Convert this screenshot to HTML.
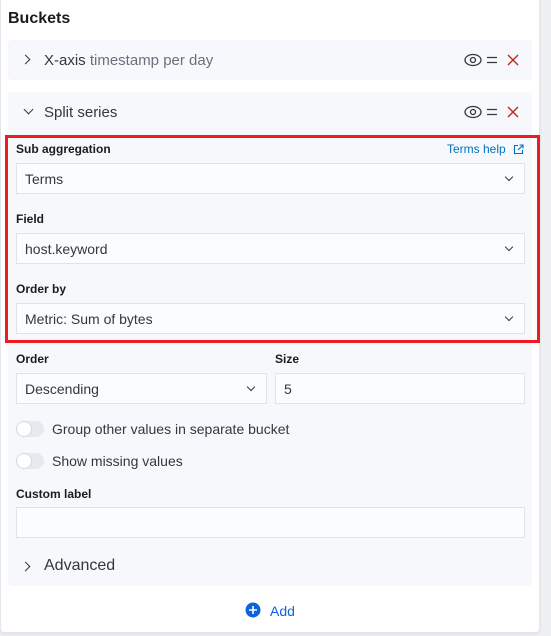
<!DOCTYPE html>
<html><head><style>
*{box-sizing:border-box;margin:0;padding:0}
body{width:551px;height:636px;background:#eef0f3;font-family:"Liberation Sans",sans-serif;position:relative;overflow:hidden}
.panel{position:absolute;left:0;top:-4px;width:540px;height:637px;background:#fff;border:1px solid #e3e6eb;border-radius:4px;box-shadow:0 1px 3px rgba(0,0,0,.08)}
.a{position:absolute}
.sec{position:absolute;left:8px;width:524px;background:#f7f8fb;border-radius:4px}
.t{font-size:15px;color:#343741}
.lbl{position:absolute;left:16px;font-size:12px;font-weight:bold;color:#1a1c21}
.inp{position:absolute;background:#fbfcfd;border:1px solid #e0e3e8;height:31px;font-size:14px;color:#343741;padding:7px 0 0 8px}
.chev{position:absolute;right:12px;top:10px;width:6px;height:6px;border-right:1.2px solid #343741;border-bottom:1.2px solid #343741;transform:rotate(45deg)}
.tog{position:absolute;left:16px;width:28px;height:16px;border-radius:8px;background:#e6e9ee}
.tog:after{content:"";position:absolute;left:0;top:0;width:16px;height:16px;border-radius:8px;background:#fff;border:1px solid #d3d8de;box-sizing:border-box}
</style></head><body>
<div class="panel"></div>
<div class="a" style="left:8px;top:10px;font-size:16px;font-weight:bold;color:#1a1c21">Buckets</div>
<div class="sec" style="top:40px;height:40px"></div>
<div class="a" style="left:22px;top:56px;width:7px;height:7px;border-right:1.3px solid #343741;border-top:1.3px solid #343741;transform:rotate(45deg)"></div>
<div class="a t" style="left:44px;top:52px">X-axis <span style="color:#69707d">timestamp per day</span></div>
<div class="sec" style="top:92px;height:494px"></div>
<div class="a" style="left:25px;top:106px;width:7px;height:7px;border-right:1.3px solid #343741;border-bottom:1.3px solid #343741;transform:rotate(45deg)"></div>
<div class="a t" style="left:44px;top:104px">Split series</div>
<svg class="a" style="left:463px;top:52px" width="60" height="16"><ellipse cx="10" cy="8" rx="8" ry="5.5" fill="none" stroke="#343741" stroke-width="1.3"/><circle cx="10" cy="8" r="2.5" fill="none" stroke="#343741" stroke-width="1.3"/><path d="M24 5.5h10M24 10.5h10" stroke="#343741" stroke-width="1.3"/><path d="M45 3l10 10M55 3l-10 10" stroke="#bd271e" stroke-width="1.4"/></svg>
<svg class="a" style="left:463px;top:104px" width="60" height="16"><ellipse cx="10" cy="8" rx="8" ry="5.5" fill="none" stroke="#343741" stroke-width="1.3"/><circle cx="10" cy="8" r="2.5" fill="none" stroke="#343741" stroke-width="1.3"/><path d="M24 5.5h10M24 10.5h10" stroke="#343741" stroke-width="1.3"/><path d="M45 3l10 10M55 3l-10 10" stroke="#bd271e" stroke-width="1.4"/></svg>
<div class="a" style="left:5px;top:135px;width:535px;height:208px;border:3px solid #ed1c24"></div>
<div class="lbl" style="top:142px">Sub aggregation</div>
<div class="a" style="left:447px;top:142px;font-size:12px;color:#0071c2">Terms help</div>
<svg class="a" style="left:513px;top:144px" width="11" height="11"><path d="M5 1.5H1.5v8h8V6M6.5 1h3.5v3.5M10 1L5 6" fill="none" stroke="#0071c2" stroke-width="1.1"/></svg>
<div class="inp" style="left:16px;top:163px;width:509px">Terms<div class="chev"></div></div>
<div class="lbl" style="top:212px">Field</div>
<div class="inp" style="left:16px;top:233px;width:509px">host.keyword<div class="chev"></div></div>
<div class="lbl" style="top:282px">Order by</div>
<div class="inp" style="left:16px;top:303px;width:509px">Metric: Sum of bytes<div class="chev"></div></div>
<div class="lbl" style="top:352px">Order</div>
<div class="lbl" style="top:352px;left:275px">Size</div>
<div class="inp" style="left:16px;top:373px;width:251px">Descending<div class="chev"></div></div>
<div class="inp" style="left:275px;top:373px;width:250px">5</div>
<div class="tog" style="top:421px"></div>
<div class="a t" style="left:52px;top:421px;font-size:14px">Group other values in separate bucket</div>
<div class="tog" style="top:453px"></div>
<div class="a t" style="left:52px;top:453px;font-size:14px">Show missing values</div>
<div class="lbl" style="top:487px">Custom label</div>
<div class="inp" style="left:16px;top:507px;width:509px"></div>
<div class="a" style="left:22px;top:563px;width:7px;height:7px;border-right:1.3px solid #343741;border-top:1.3px solid #343741;transform:rotate(45deg)"></div>
<div class="a t" style="left:44px;top:557px;font-size:16px">Advanced</div>
<svg class="a" style="left:245px;top:602px" width="16" height="16"><circle cx="8" cy="8" r="7.5" fill="#0b64dd"/><path d="M8 4v8M4 8h8" stroke="#fff" stroke-width="1.6"/></svg>
<div class="a" style="left:270px;top:603px;font-size:14px;color:#0b64dd">Add</div>
</body></html>
